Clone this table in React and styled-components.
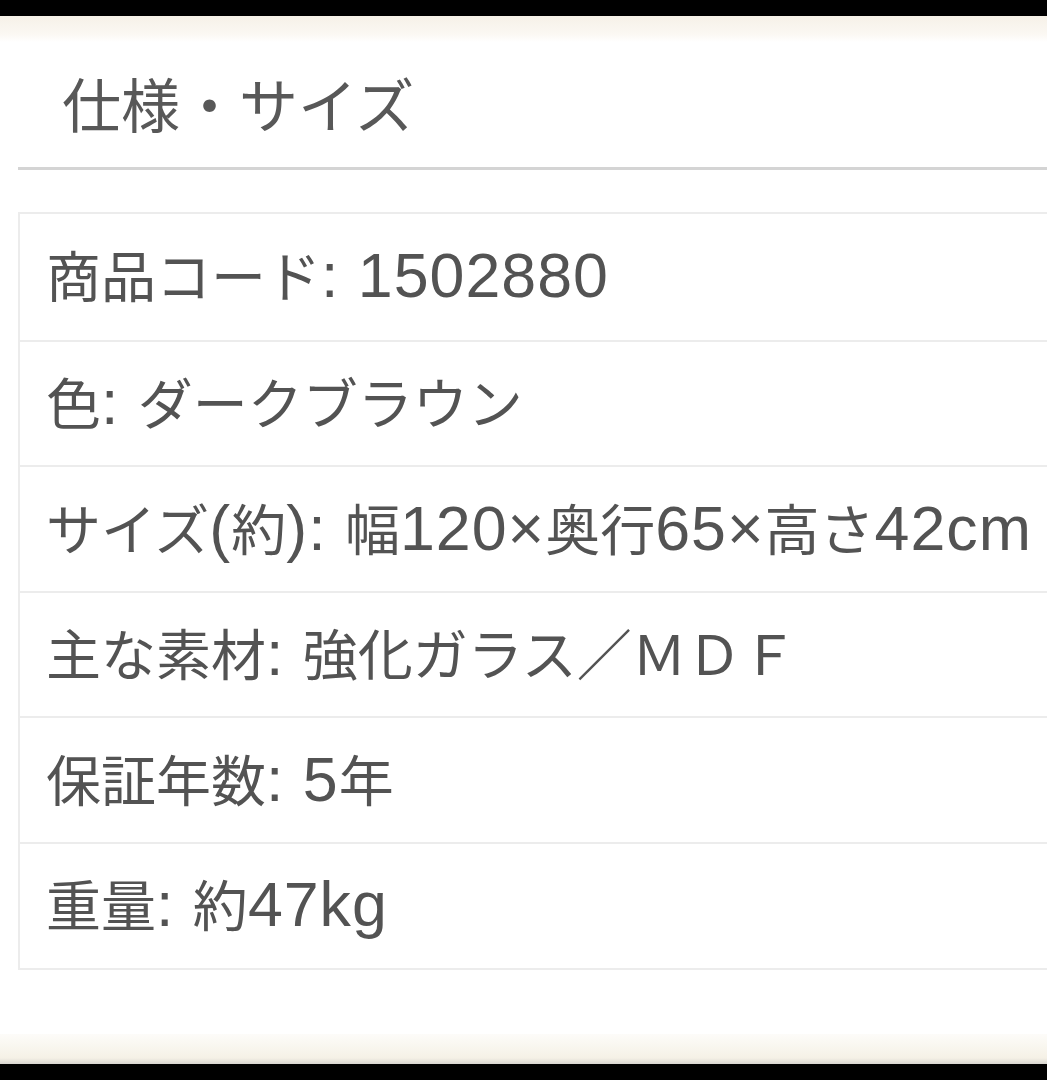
import React from 'react'
import styled, { createGlobalStyle } from 'styled-components'

const specs = [
  '商品コード: 1502880',
  '色: ダークブラウン',
  'サイズ(約): 幅120×奥行65×高さ42cm',
  '主な素材: 強化ガラス／ＭＤＦ',
  '保証年数: 5年',
  '重量: 約47kg',
]

// latin runs are set a bit larger, as the original font does
const LATIN = /^[\x20-\x7E×]+$/
const splitRuns = text => text.split(/([\x20-\x7E×]+)/).filter(Boolean)

const GlobalStyle = createGlobalStyle`
  html, body {
    margin: 0;
    padding: 0;
    background: #000;
  }
  body {
    font-family: "Noto Sans CJK JP", "Noto Sans", sans-serif;
    overflow: hidden;
  }
`

const Screen = styled.div`
  width: 1047px;
  height: 1080px;
  display: flex;
  flex-direction: column;
  background: #000;
  overflow: hidden;
`

const BlackEdge = styled.div`
  height: 16px;
  background: #000;
  flex: none;
`

const CreamBand = styled.div`
  height: ${({ h }) => h}px;
  flex: none;
  background: ${({ flip }) => flip
    ? 'linear-gradient(to bottom, #fdfcf9, #f5f1e6 80%, #d8d6d0)'
    : 'linear-gradient(to bottom, #f6f1e8, #fbf8f3 70%, #ffffff)'};
`

const Page = styled.div`
  flex: 1;
  background: #fff;
  display: flex;
  flex-direction: column;
  padding-left: 18px;
`

const TitleBlock = styled.div`
  height: 128px;
  display: flex;
  align-items: center;
  padding-left: 44px;
  padding-bottom: 4px;
  box-sizing: border-box;
  border-bottom: 3px solid #d4d4d4;
  margin-right: -10px;
`

const Title = styled.h2`
  margin: 0;
  font-size: 59px;
  font-weight: 400;
  color: #585858;
`

const SpecTable = styled.div`
  margin-top: 42px;
  margin-right: -20px;
  border: 2px solid #ececec;
  display: flex;
  flex-direction: column;
`

const SpecRow = styled.div`
  height: 125.6px;
  box-sizing: border-box;
  display: flex;
  align-items: center;
  padding: 0 0 2px 26px;
  font-size: 55px;
  line-height: 1;
  color: #535353;
  white-space: pre;
  border-top: ${({ first }) => first ? 'none' : '2px solid #ececec'};
`

const Latin = styled.span`
  font-family: "Liberation Sans", Arial, sans-serif;
  font-size: 1.14em;
  letter-spacing: 1px;
`

export default function App () {
  return (<Screen>
    <GlobalStyle />
    <BlackEdge />
    <CreamBand h={26} />
    <Page>
      <TitleBlock>
        <Title>仕様・サイズ</Title>
      </TitleBlock>
      <SpecTable>
        {specs.map((text, i) => (
          <SpecRow key={text} first={i === 0}>
            <span>
              {splitRuns(text).map((run, j) => LATIN.test(run)
                ? <Latin key={j}>{run}</Latin>
                : <React.Fragment key={j}>{run}</React.Fragment>)}
            </span>
          </SpecRow>
        ))}
      </SpecTable>
    </Page>
    <CreamBand h={30} flip />
    <BlackEdge />
  </Screen>)
}
